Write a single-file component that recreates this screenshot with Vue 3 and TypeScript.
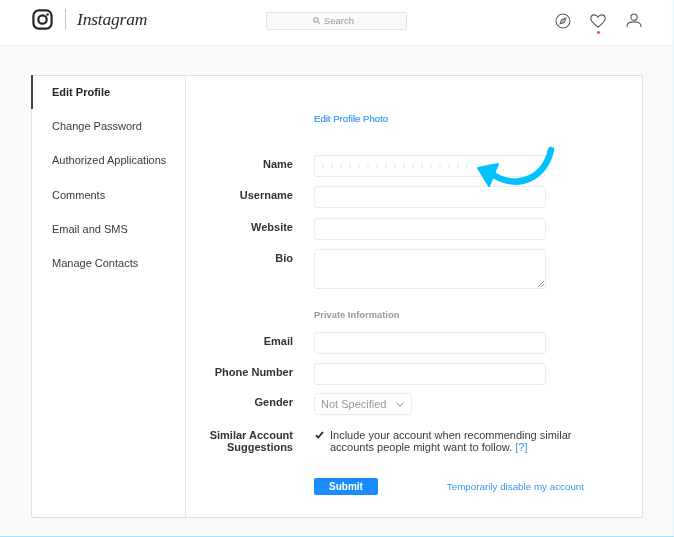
<template>
  <div class="page">
    <header class="topbar">
      <div class="brand">
        <svg class="logo" width="21" height="21" viewBox="0 0 22 22" fill="none" stroke="#262626" stroke-width="2.3">
          <rect x="1.500" y="1.500" width="19" height="19" rx="5.500" />
          <circle cx="11" cy="11" r="4.400" />
          <circle cx="16.300" cy="5.700" r="1.300" fill="#262626" stroke="none" />
        </svg>
        <span class="divider"></span>
        <span class="wordmark">Instagram</span>
      </div>
      <div class="search">
        <svg width="7" height="7" viewBox="0 0 8 8" fill="none" stroke="#999" stroke-width="1.200">
          <circle cx="3.300" cy="3.300" r="2.500" />
          <path d="M5.200 5.200 7.600 7.600" />
        </svg>
        <span>Search</span>
      </div>
      <nav class="nav-icons">
        <svg width="16" height="16" viewBox="0 0 17 17" fill="none" stroke="#5c5c5c" stroke-width="1.100">
          <circle cx="8.500" cy="8.500" r="7.400" />
          <path d="M11.600 5.400 9.900 9.900 5.400 11.600 7.100 7.100Z" />
          <path d="M11.600 5.400 7.100 7.100 5.400 11.600 9.900 9.900Z" fill="#5c5c5c" fill-opacity="0.350" stroke="none" />
        </svg>
        <div class="heart">
          <svg width="16" height="14" viewBox="0 0 17 15" fill="none" stroke="#5c5c5c" stroke-width="1.200">
            <path d="M8.500 13.900C5.500 11.600.8 8.600.8 4.900.8 2.600 2.500 1 4.500 1 6.200 1 7.600 1.800 8.500 3.400 9.400 1.800 10.800 1 12.500 1c2 0 3.700 1.600 3.700 3.900 0 3.700-4.700 6.700-7.700 9Z" />
          </svg>
          <span class="dot"></span>
        </div>
        <svg class="person" width="16" height="15" viewBox="0 0 16 16" fill="none" stroke="#5c5c5c" stroke-width="1.200">
          <circle cx="8" cy="4.400" r="3.300" />
          <path d="M.7 14.800v-1.400C.7 10.900 4 9.500 8 9.500s7.300 1.400 7.300 3.900v1.400" />
        </svg>
      </nav>
    </header>

    <main class="content">
      <section class="card">
        <aside class="sidebar">
          <a
            v-for="(item, i) in menu"
            :key="item"
            class="menu-item"
            :class="{ active: i === 0 }"
          >{{ item }}</a>
        </aside>

        <div class="form">
          <div class="photo-row">
            <a class="link strong">Edit Profile Photo</a>
          </div>

          <div v-for="f in topFields" :key="f" class="row">
            <label>{{ f }}</label>
            <div class="input" :class="{ redacted: f === 'Name' }"></div>
          </div>
          <div class="row bio">
            <label>Bio</label>
            <div class="input textarea">
              <svg class="grip" width="7" height="7" viewBox="0 0 7 7" stroke="#777" stroke-width="0.800">
                <path d="M1 7 7 1M4 7 7 4" />
              </svg>
            </div>
          </div>

          <div class="section-title">Private Information</div>

          <div v-for="f in privateFields" :key="f" class="row">
            <label>{{ f }}</label>
            <div class="input"></div>
          </div>

          <div class="row gender">
            <label>Gender</label>
            <div class="select">
              <span>Not Specified</span>
              <svg width="8" height="5" viewBox="0 0 8 5" fill="none" stroke="#999" stroke-width="1">
                <path d="M.6.800 4 4 7.400.800" />
              </svg>
            </div>
          </div>

          <div class="row similar">
            <label>Similar Account Suggestions</label>
            <div class="check-wrap">
              <svg class="check" width="9" height="8" viewBox="0 0 9 8" fill="none" stroke="#262626" stroke-width="1.800">
                <path d="M1 4.300 3.300 6.500 8 1" />
              </svg>
              <p>Include your account when recommending similar accounts people might want to follow. <a class="link">[?]</a></p>
            </div>
          </div>

          <div class="row actions">
            <span></span>
            <div class="action-line">
              <button type="button">Submit</button>
              <a class="link">Temporarily disable my account</a>
            </div>
          </div>

          <svg class="arrow" width="90" height="50" viewBox="0 0 90 50" fill="none">
            <path d="M80 6C74 32 50 46 24 32" stroke="#00c2ff" stroke-width="6.500" stroke-linecap="round" />
            <path d="M7 24 27 20 18 42Z" fill="#00c2ff" stroke="#00c2ff" stroke-width="2" stroke-linejoin="round" />
          </svg>
        </div>
      </section>
    </main>
  </div>
</template>

<script setup lang="ts">
const menu: string[] = [
  "Edit Profile",
  "Change Password",
  "Authorized Applications",
  "Comments",
  "Email and SMS",
  "Manage Contacts",
];
const topFields: string[] = ["Name", "Username", "Website"];
const privateFields: string[] = ["Email", "Phone Number"];
</script>

<style>
html,
body {
  margin: 0;
  background: #fafafa;
}
</style>

<style scoped>
.page {
  width: 674px;
  height: 537px;
  box-sizing: border-box;
  overflow: hidden;
  background: #fafafa;
  border-bottom: 1px solid #9fe6fb;
  border-right: 1px solid #dcf6fd;
  font-family: "Liberation Sans", Arial, sans-serif;
  font-size: 11px;
  color: #262626;
  filter: blur(0.35px);
}

.topbar {
  height: 46px;
  box-sizing: border-box;
  display: flex;
  align-items: center;
  background: #fff;
  border-bottom: 1px solid #ebebeb;
  padding: 0 31.500px 4px 32px;
}

.brand {
  display: flex;
  align-items: center;
  width: 234px;
  margin-top: -3px;
}

.divider {
  width: 1px;
  height: 21px;
  background: #c4c4c4;
  margin: 0 11px 0 12px;
}

.wordmark {
  font-family: "Liberation Serif", serif;
  font-style: italic;
  font-size: 17.500px;
  color: #2a2a2a;
  letter-spacing: -0.200px;
}

.search {
  width: 141px;
  height: 18px;
  box-sizing: border-box;
  display: flex;
  align-items: center;
  justify-content: center;
  gap: 4px;
  padding-right: 6px;
  background: #fafafa;
  border: 1px solid #e3e3e3;
  border-radius: 2px;
  color: #999;
  font-size: 9.600px;
}

.nav-icons {
  margin-left: auto;
  display: flex;
  align-items: center;
  gap: 19.500px;
}

.heart {
  position: relative;
  display: flex;
}

.dot {
  position: absolute;
  left: 6.500px;
  top: 17px;
  width: 3px;
  height: 3px;
  border-radius: 50%;
  background: #ed4956;
}

.content {
  padding: 29px 31px 0;
}

.card {
  width: 612px;
  height: 443px;
  box-sizing: border-box;
  display: flex;
  background: #fff;
  border: 1px solid #dfdfdf;
  border-radius: 2px;
}

.sidebar {
  width: 153px;
  flex: none;
  display: flex;
  flex-direction: column;
  border-right: 1px solid #e6e6e6;
  margin-top: -1px;
}

.menu-item {
  height: 34.200px;
  box-sizing: border-box;
  display: flex;
  align-items: center;
  border-left: 2px solid transparent;
  margin-left: -1px;
  padding-left: 19px;
  color: #3a3a3a;
}

.menu-item.active {
  border-left-color: #444;
  font-weight: 700;
  color: #262626;
}

.form {
  flex: 1;
  position: relative;
  padding-top: 36px;
}

.link {
  color: #3897f0;
}

.link.strong {
  font-size: 9.600px;
  -webkit-text-stroke: 0.2px #3897f0;
}

.photo-row {
  padding-left: 128px;
  height: 43px;
  line-height: 13px;
}

.row {
  display: grid;
  grid-template-columns: 107px 232px;
  column-gap: 21px;
  margin-bottom: 9.300px;
}

.row label {
  text-align: right;
  font-weight: 700;
  line-height: 13px;
  padding-top: 3px;
  color: #333;
}

.input {
  height: 22px;
  box-sizing: border-box;
  background: #fff;
  border: 1px solid #ececec;
  border-radius: 3px;
}

.redacted {
  background: repeating-linear-gradient(90deg, #f3f3f3 0 2px, #fff 2px 9px) 7px 7px / 150px 6px no-repeat #fff;
}

.textarea {
  height: 40px;
  position: relative;
}

.grip {
  position: absolute;
  right: 1px;
  bottom: 1px;
}

.section-title {
  padding-left: 128px;
  margin: 20px 0 11px;
  font-size: 9.400px;
  font-weight: 700;
  line-height: 12px;
  color: #999;
}

.gender {
  margin-top: -1px;
}

.select {
  width: 98px;
  height: 22px;
  box-sizing: border-box;
  display: flex;
  align-items: center;
  justify-content: space-between;
  padding: 0 7px 0 6px;
  border: 1px solid #ececec;
  border-radius: 3px;
  color: #999;
}

.similar {
  margin-top: 14px;
  margin-bottom: 0;
  grid-template-columns: 107px 270px;
}

.similar label {
  padding-top: 0;
  line-height: 12px;
}

.check-wrap {
  display: flex;
  gap: 6px;
  align-items: flex-start;
}

.check {
  flex: none;
  margin: 2px 0 0 1px;
}

.check-wrap p {
  margin: 0;
  line-height: 12px;
  width: 250px;
  color: #3a3a3a;
}

.actions {
  margin-top: 25px;
  grid-template-columns: 107px 270px;
}

.action-line {
  display: flex;
  align-items: center;
  justify-content: space-between;
}

.action-line .link {
  font-size: 9.800px;
}

button {
  width: 64px;
  height: 17px;
  padding: 0;
  border: none;
  border-radius: 2px;
  background: #1a8cff;
  color: #fff;
  font: 700 10px "Liberation Sans", Arial, sans-serif;
}

.arrow {
  position: absolute;
  left: 285px;
  top: 68px;
}
</style>
